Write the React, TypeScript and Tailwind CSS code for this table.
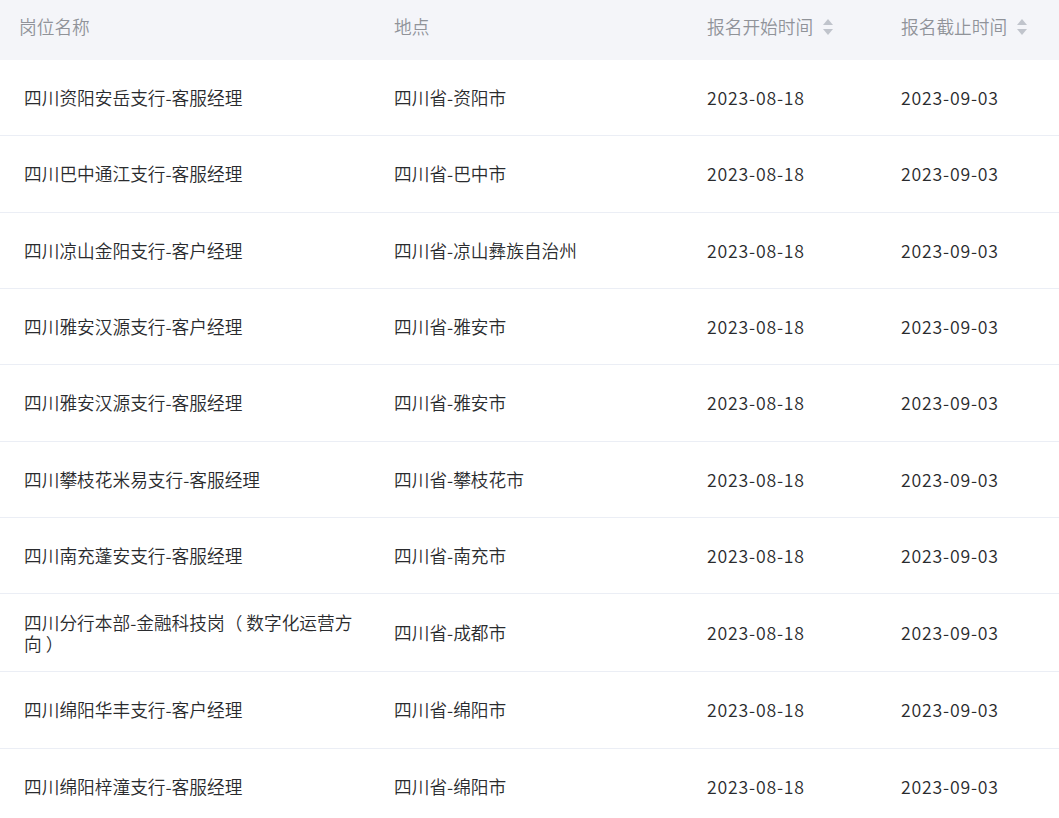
import React from "react";

const rows: [string, string][] = [
  ["四川资阳安岳支行-客服经理", "四川省-资阳市"],
  ["四川巴中通江支行-客服经理", "四川省-巴中市"],
  ["四川凉山金阳支行-客户经理", "四川省-凉山彝族自治州"],
  ["四川雅安汉源支行-客户经理", "四川省-雅安市"],
  ["四川雅安汉源支行-客服经理", "四川省-雅安市"],
  ["四川攀枝花米易支行-客服经理", "四川省-攀枝花市"],
  ["四川南充蓬安支行-客服经理", "四川省-南充市"],
  ["四川分行本部-金融科技岗（ 数字化运营方向 ）", "四川省-成都市"],
  ["四川绵阳华丰支行-客户经理", "四川省-绵阳市"],
  ["四川绵阳梓潼支行-客服经理", "四川省-绵阳市"],
];

function SortIcon() {
  return (
    <span className="ml-[10px] inline-flex flex-col gap-[4px]">
      <svg width="10" height="6" viewBox="0 0 10 6" className="block">
        <path d="M5 0 L10 6 L0 6 Z" fill="#c0c4cc" />
      </svg>
      <svg width="10" height="6" viewBox="0 0 10 6" className="block">
        <path d="M0 0 L10 0 L5 6 Z" fill="#c0c4cc" />
      </svg>
    </span>
  );
}

export default function App() {
  return (
    <div
      className="w-[1059px] bg-white text-[17.7px] leading-[21px] font-[350]"
      style={{ fontFamily: '"Noto Sans CJK SC", "Noto Sans", sans-serif' }}
    >
      <div className="grid h-[60px] grid-cols-[394px_313px_194px_158px] items-center bg-[#f4f5f9] pb-[7px] text-[#909399]">
        <div className="pl-[19px]">岗位名称</div>
        <div>地点</div>
        <div className="flex items-center">
          报名开始时间
          <SortIcon />
        </div>
        <div className="flex items-center">
          报名截止时间
          <SortIcon />
        </div>
      </div>
      {rows.map(([name, loc], i) => (
        <div
          key={i}
          className="grid min-h-[76.33px] grid-cols-[394px_313px_194px_158px] items-center border-b border-[#ebeef5] py-[17.5px] text-[#2a2b2e]"
        >
          <div className="pl-[24px] pr-[30px]">{name}</div>
          <div>{loc}</div>
          <div className="tracking-[0.8px]">2023-08-18</div>
          <div className="tracking-[0.8px]">2023-09-03</div>
        </div>
      ))}
    </div>
  );
}
